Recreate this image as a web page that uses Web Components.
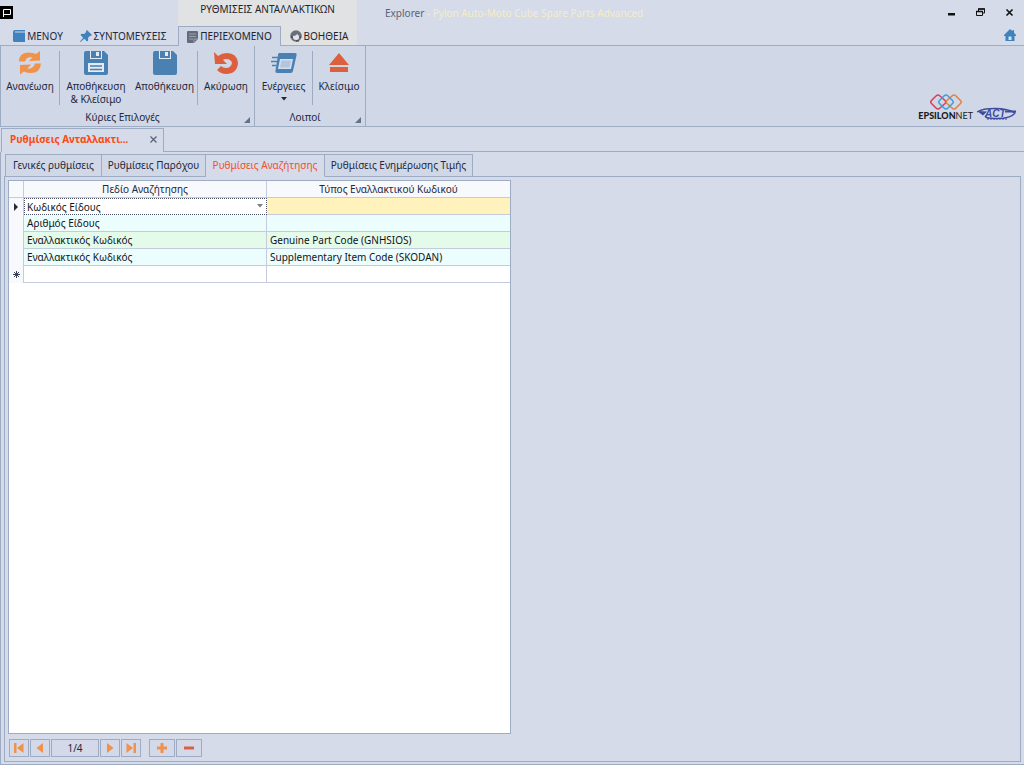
<!DOCTYPE html>
<html lang="el">
<head>
<meta charset="utf-8">
<title>Explorer - Pylon Auto-Moto Cube Spare Parts Advanced</title>
<style>
html,body{height:100%;margin:0}
body{
  --bg:#d5dbe9;--ribbon:#d0d7e7;--line:#9eacc3;--ink:#22283e;--orange:#f0924a;--red:#dd603e;--blue:#4a80b2;
  background:var(--bg);color:var(--ink);font:10px/13px "Noto Sans","Open Sans",sans-serif;overflow:hidden}
</style>
</head>
<body>
<pylon-window></pylon-window>
<script>
const define=(name,html,setup)=>{
  const t=document.createElement('template');
  t.innerHTML='<style>*{box-sizing:border-box}button,input,select{font:inherit;color:inherit;margin:0}</style>'+html;
  customElements.define(name,class extends HTMLElement{
    connectedCallback(){
      if(this.shadowRoot)return;
      this.attachShadow({mode:'open'}).append(t.content.cloneNode(true));
      if(setup)setup(this,this.shadowRoot);
    }
  });
};

const ICONS={
  app:['0 0 13 13','<path d="M0 0h13v13H0z" fill="#000"/><path d="M3.500 11V3.500h7v5h-7" fill="none" stroke="#fff"/>'],
  book:['0 0 12 12','<path d="M2 0h10v1.500H2V2.500h10V12H1.500Q0 12 0 10.500V2Q0 0 2 0z" fill="#3f82bd"/>'],
  pin:['0 0 12 12','<path d="M7 0l5 5-1 1-1-.3-2 2.300.2 2.500-1.200 1-2.700-2.700L.5 12 0 11.500l3.200-3.800L.5 5l1-1.200 2.500.2L6.300 2 6 1z" fill="#3f82bd"/>'],
  note:['0 0 11 12','<path d="M1 0h9q1 0 1 1v7l-4 4H1q-1 0-1-1V1q0-1 1-1z" fill="#646b7a"/><path d="M2 3h7M2 5.500h7M2 8h4M7 12V8h4" stroke="#aab1bf" stroke-width=".8" fill="none"/>'],
  help:['0 0 12 12','<circle cx="6" cy="6" r="5.800" fill="#69707c"/><path d="M2.800 6q3 .3 4.400-2 .7 1.700 2.200 2 0 4-3.300 4T2.800 6z" fill="#e1e3e7"/><path d="M1 7h2M9 7h2M6 11h3" stroke="#2f3541"/>'],
  home:['0 0 12 12','<path d="M6 0l2.500 2.200V1H10v2.700L12 6v1h-1.500v5H1.500V7H0V6z" fill="#3f82bd"/><path d="M4.500 7.500h3V11h-3z" fill="#d5e3f2"/>'],
  min:['0 0 9 9','<path d="M1 5h7v2.500H1z" fill="#111"/>'],
  restore:['0 0 9 9','<path d="M2.500 3V1h6v4h-2M.5 3.500h6v4h-6z" fill="none" stroke="#111"/><path d="M2 1h7M0 3.500h7" stroke="#111" stroke-width="1.500"/>'],
  close:['0 0 9 9','<path d="M1.500 1.500l6 6m0-6l-6 6" stroke="#111" stroke-width="1.600"/>'],
  thin:['0 0 9 9','<path d="M1.500 1.500l6 6m0-6l-6 6" stroke="#59647a" stroke-width="1.300"/>'],
  refresh:['0 0 24 24','<path d="M1 10.500Q1 2 10 1.500q5 0 8 1.500l4-3v9.500l-11 .5 3.500-3.500Q8.500 5 7 10.500zM23 12.500q-1 9.500-10 9.500-4 0-7-1.500L2 23.500V14l11-.5-3.500 4q5.500 1 7.500-5z" fill="#f0924a"/>'],
  saveclose:['0 0 24 24','<path d="M2 0h4v8h12V0h2l4 4v18q0 2-2 2H2q-2 0-2-2V2Q0 0 2 0z" fill="#4a80b2"/><path d="M7 0h10v7H7z" fill="#4a80b2"/><path d="M6 0h1v7h10V0h1v8H6zM12 1h3v4h-3zM4 12h16v9H4z" fill="#e3ebf5"/><path d="M6 15h12M6 18.500h12" stroke="#4a80b2" stroke-width="1.500"/>'],
  save:['0 0 24 24','<path d="M2 0h4v8h12V0h2l4 4v18q0 2-2 2H2q-2 0-2-2V2Q0 0 2 0z" fill="#4a80b2"/><path d="M7 0h10v7H7z" fill="#4a80b2"/><path d="M6 0h1v7h10V0h1v8H6zM12 1h3v4h-3z" fill="#e3ebf5"/>'],
  undo:['0 0 24 24','<path d="M0 1l4 4Q8 2 13 2q10 0 11 10-1 11-12 11-5 0-9-4l4-4q2 2 5 2 5 0 6-5-1-4-6-4-2 0-3 1l4 4H1z" fill="#dd603e"/>'],
  actions:['0 0 26 22','<path d="M8 1h16q2 0 1.600 2L22 19q-.4 2-2.400 2H6q-2 0-1.600-2L7 3q.2-2 1-2z" fill="#4a80b2"/><path d="M9 7h13l-2 10H7z" fill="#d3deed"/><path d="M10.500 8.500h9.500l-1.500 7H9z" fill="#4a80b2" opacity=".25"/><path d="M1 5.500h6M0 9.500h6M1 13.500h4" stroke="#4a80b2" stroke-width="1.600"/>'],
  eject:['0 0 20 20','<path d="M10 0l10 12H0zM1 14h18v5H1z" fill="#dd603e"/>'],
  down:['0 0 6 4','<path d="M0 0h6L3 3.500z" fill="#22283e"/>'],
  corner:['0 0 6 6','<path d="M6 0v6H0z" fill="#667088"/>'],
  first:['0 0 10 10','<path d="M0 0h2.500v10H0zM9.500 0v10L3 5z" fill="#f0924a"/>'],
  prev:['0 0 10 10','<path d="M8 0v10L1.500 5z" fill="#f0924a"/>'],
  next:['0 0 10 10','<path d="M2 0v10l6.500-5z" fill="#f0924a"/>'],
  last:['0 0 10 10','<path d="M7.500 0H10v10H7.500zM.5 0v10L7 5z" fill="#f0924a"/>'],
  plus:['0 0 10 10','<path d="M3.500 0h3v3.500H10v3H6.500V10h-3V6.500H0v-3h3.500z" fill="#f0924a"/>'],
  minus:['0 0 10 10','<path d="M0 3.500h10v3H0z" fill="#dd603e"/>'],
  current:['0 0 4 8','<path d="M0 0l4 4-4 4z" fill="#22283e"/>'],
  newrow:['0 0 7 7','<path d="M3.500 0v7M0 3.500h7M1 1l5 5m0-5L1 6" stroke="#3a4258" stroke-width="1"/>'],
  epsilon:['0 0 32 16','<g fill="none" stroke-width="1.500"><path d="M6 2Q8 0 10 2L15 6.500q1.500 1.500 0 3L10 14q-2 2-4 0L1.500 9.500q-1.500-1.500 0-3z" stroke="#dc3c55"/><path d="M22 2q2-2 4 0l4.500 4.500q1.500 1.500 0 3L26 14q-2 2-4 0l-5-4.500q-1.500-1.500 0-3z" stroke="#e5813d"/><path d="M14 2q2-2 4 0l4.500 4.500q1.500 1.500 0 3L18 14q-2 2-4 0L9.500 9.500q-1.500-1.500 0-3z" stroke="#3f9fd0"/></g>']
};
customElements.define('pylon-icon',class extends HTMLElement{
  connectedCallback(){
    if(this.shadowRoot)return;
    const [box,body]=ICONS[this.getAttribute('name')],[,,w,h]=box.split(' ');
    this.attachShadow({mode:'open'}).innerHTML='<style>:host{display:block;flex:none}svg{display:block}</style><svg aria-hidden="true" width="'+w+'" height="'+h+'" viewBox="'+box+'">'+body+'</svg>';
  }
});

define('ribbon-tab',`<style>
:host{display:block}
button{display:flex;align-items:center;gap:2px;height:19px;width:100%;padding:0;border:1px solid transparent;border-bottom:0;background:none;justify-content:center;white-space:nowrap}
:host([active]) button{background:var(--ribbon);border-color:var(--line);height:20px}
</style><button type="button"><slot name="icon"></slot><slot></slot></button>`);

define('ribbon-button',`<style>
:host{display:block;flex:none}
:host([divider]){border-right:1px solid var(--line)}
button{display:flex;flex-direction:column;align-items:center;width:100%;height:54px;padding:0;border:0;background:none;line-height:13px;text-align:center;white-space:nowrap}
.i{height:24px;display:flex;align-items:center;margin-bottom:5px}
.t{display:flex;flex-direction:column;align-items:center}
::slotted(pylon-icon[slot=more]){margin-top:4px}
</style><button type="button"><span class="i"><slot name="icon"></slot></span><span class="t"><slot></slot></span><slot name="more"></slot></button>`);

define('ribbon-group',`<style>
:host{display:flex;flex-direction:column;border-right:1px solid var(--line)}
.b{display:flex;align-items:start;height:63px;padding-top:5px}
.f{display:flex;align-items:center;height:17px;padding-right:4px}
.f span{flex:1;text-align:center}
.f pylon-icon{padding-top:4px}
</style><div class="b"><slot></slot></div><div class="f"><span><slot name="title"></slot></span><pylon-icon name="corner"></pylon-icon></div>`);

define('title-bar',`<style>
:host{display:grid;grid-template-columns:178px 179px minmax(0,1fr) auto;flex:none;height:46px;border-bottom:1px solid var(--line)}
.l,.c{display:flex;flex-direction:column;justify-content:space-between}
.l>pylon-icon{padding-top:6px}
.row{display:flex;align-items:end}
.l .row{padding-left:8px}
.c{background:#e1e2e4;color:#22242c}
.c .h{text-align:center;padding-top:3px}
.c .row{margin-bottom:-1px;align-items:start}
.t{padding:7px 0 0 28px;color:#5b6376;white-space:nowrap}
.t b{font-weight:400;color:#f3eec4}
.w{display:flex;flex-direction:column;align-items:end;justify-content:space-between;padding:8px 8px 4px 0}
.w div{display:flex;gap:20px;padding-right:2px}
.w button{border:0;background:none;padding:0;display:block}
.m{width:60px}.s{width:110px}.p{width:103px}.v{width:76px}
</style>
<div class="l"><pylon-icon name="app"></pylon-icon><div class="row"><ribbon-tab class="m"><pylon-icon slot="icon" name="book"></pylon-icon>ΜΕΝΟΥ</ribbon-tab><ribbon-tab class="s"><pylon-icon slot="icon" name="pin"></pylon-icon>ΣΥΝΤΟΜΕΥΣΕΙΣ</ribbon-tab></div></div>
<div class="c"><div class="h">ΡΥΘΜΙΣΕΙΣ ΑΝΤΑΛΛΑΚΤΙΚΩΝ</div><div class="row"><ribbon-tab class="p" active><pylon-icon slot="icon" name="note"></pylon-icon>ΠΕΡΙΕΧΟΜΕΝΟ</ribbon-tab><ribbon-tab class="v"><pylon-icon slot="icon" name="help"></pylon-icon>ΒΟΗΘΕΙΑ</ribbon-tab></div></div>
<div class="t">Explorer <b>- Pylon Auto-Moto Cube Spare Parts Advanced</b></div>
<div class="w"><div><button aria-label="Minimize"><pylon-icon name="min"></pylon-icon></button><button aria-label="Restore"><pylon-icon name="restore"></pylon-icon></button><button aria-label="Close"><pylon-icon name="close"></pylon-icon></button></div><button aria-label="Home"><pylon-icon name="home"></pylon-icon></button></div>`);

define('act-logo',`<style>:host{display:block}svg{display:block}</style>
<svg width="40" height="14" viewBox="0 0 40 14" role="img" aria-label="ACT"><path d="M0 5Q5 1.500 18 1.500t20 4.500q-4 5.500-18 5.500T9 8.500" fill="none" stroke="#3d4ba0" stroke-width="1.300"/><path d="M0 4l10 .5-4 4z" fill="#3d4ba0"/><text x="8" y="10" font-family="Liberation Sans" font-size="10" font-weight="700" font-style="italic" fill="#3d4ba0">ACT</text><path d="M28 3.500h11v2H28z" fill="#3d4ba0"/><path d="M10 12h20" stroke="#3d4ba0" stroke-dasharray="2 1"/></svg>`);

define('ribbon-bar',`<style>
:host{display:flex;flex:none;height:81px;background:var(--ribbon);border-bottom:1px solid var(--line);border-left:1px solid var(--line)}
.sp{flex:1}
.logos{display:flex;align-items:end;gap:4px;padding:0 7px 5px 0}
.e{display:flex;flex-direction:column;align-items:center;font:9px/10px Lato,sans-serif;color:#191b22}
.e pylon-icon{margin-bottom:1px}
.logos b{font-weight:900}
.x1{width:59px}.x2{width:72px}.x3{width:66px}.x4{width:56px}.x5{width:58px}.x6{width:52px}
</style>
<ribbon-group><ribbon-button class="x1" divider><pylon-icon slot="icon" name="refresh"></pylon-icon>Ανανέωση</ribbon-button><ribbon-button class="x2"><pylon-icon slot="icon" name="saveclose"></pylon-icon><span>Αποθήκευση</span><span>&amp; Κλείσιμο</span></ribbon-button><ribbon-button class="x3" divider><pylon-icon slot="icon" name="save"></pylon-icon>Αποθήκευση</ribbon-button><ribbon-button class="x4"><pylon-icon slot="icon" name="undo"></pylon-icon>Ακύρωση</ribbon-button><span slot="title">Κύριες Επιλογές</span></ribbon-group>
<ribbon-group><ribbon-button class="x5" divider><pylon-icon slot="icon" name="actions"></pylon-icon>Ενέργειες<pylon-icon slot="more" name="down"></pylon-icon></ribbon-button><ribbon-button class="x6"><pylon-icon slot="icon" name="eject"></pylon-icon>Κλείσιμο</ribbon-button><span slot="title">Λοιποί</span></ribbon-group>
<div class="sp"></div>
<div class="logos"><div class="e"><pylon-icon name="epsilon"></pylon-icon><span><b>EPSILON</b>NET</span></div><act-logo></act-logo></div>`);

define('document-tabs',`<style>
:host{display:flex;flex:none;height:25px;padding:1px 0 0 1px}
.t{display:flex;align-items:center;justify-content:space-between;width:163px;padding:0 5px 2px 8px;border:1px solid var(--line);border-bottom:0;color:#fa4a12;font-weight:700}
.r{flex:1;border-bottom:1px solid var(--line)}
button{border:0;background:none;padding:0}
</style><div class="t"><span><slot></slot></span><button aria-label="Κλείσιμο καρτέλας"><pylon-icon name="thin"></pylon-icon></button></div><div class="r"></div>`);

define('page-tab',`<style>
:host{display:block;flex:none}
button{display:block;width:100%;height:23px;padding:0;background:var(--ribbon);border:1px solid var(--line);border-left:0;white-space:nowrap}
:host(:first-child) button{border-left:1px solid var(--line)}
:host([active]) button{background:var(--bg);border-bottom-color:var(--bg);color:#f2502a}
</style><button type="button"><slot></slot></button>`);

define('search-grid',`<style>
:host{display:block;background:#fff;border:1px solid var(--line);color:#11131c}
table{border-collapse:separate;border-spacing:0;width:100%;table-layout:fixed}
td,th{height:17px;padding:0 3px;line-height:14px;border-right:1px solid #c3cbdd;border-bottom:1px solid #c3cbdd;text-align:left;white-space:nowrap;font-weight:400}
tr>:last-child{border-right:0}
thead th{height:17px;background:#f7f9fd;text-align:center;color:var(--ink)}
tbody th{background:#f7f9fd;padding:0;border-bottom:0}
tbody th pylon-icon{display:flex;justify-content:center}
.h{width:15px}.a{width:243px}
.c td{background:#ebfdfd}.g td{background:#e5fbea}
.cur td{background:#fff2bd}
.cur td.ed{padding:0;background:#fff;border:1px dotted #4d5368}
label{display:flex;align-items:center;position:relative}
select{appearance:none;width:100%;height:15px;padding:0 2px;border:0;background:none;outline:0}
label pylon-icon{position:absolute;right:3px;top:5px;opacity:.6}
</style>
<table><colgroup><col class="h"><col class="a"><col></colgroup>
<thead><tr><th></th><th>Πεδίο Αναζήτησης</th><th>Τύπος Εναλλακτικού Κωδικού</th></tr></thead>
<tbody>
<tr class="cur"><th><pylon-icon name="current"></pylon-icon></th><td class="ed"><label><select aria-label="Πεδίο Αναζήτησης"><option>Κωδικός Είδους</option><option>Αριθμός Είδους</option><option>Εναλλακτικός Κωδικός</option></select><pylon-icon name="down"></pylon-icon></label></td><td></td></tr>
<tr class="c"><th></th><td>Αριθμός Είδους</td><td></td></tr>
<tr class="g"><th></th><td>Εναλλακτικός Κωδικός</td><td>Genuine Part Code (GNHSIOS)</td></tr>
<tr class="c"><th></th><td>Εναλλακτικός Κωδικός</td><td>Supplementary Item Code (SKODAN)</td></tr>
<tr><th><pylon-icon name="newrow"></pylon-icon></th><td></td><td></td></tr>
</tbody></table>`);

define('record-navigator',`<style>
:host{display:flex;gap:1px;padding:5px 0 0 1px}
button,output{display:flex;align-items:center;justify-content:center;width:20px;height:18px;padding:0;border:1px solid var(--line);background:#d3d9e8}
output{width:48px}.w{width:26px}.gap{margin-left:7px}
</style><button aria-label="Πρώτη"><pylon-icon name="first"></pylon-icon></button><button aria-label="Προηγούμενη"><pylon-icon name="prev"></pylon-icon></button><output>1/4</output><button aria-label="Επόμενη"><pylon-icon name="next"></pylon-icon></button><button aria-label="Τελευταία"><pylon-icon name="last"></pylon-icon></button><button class="w gap" aria-label="Προσθήκη"><pylon-icon name="plus"></pylon-icon></button><button class="w" aria-label="Διαγραφή"><pylon-icon name="minus"></pylon-icon></button>`);

define('pylon-window',`<style>
:host{display:flex;flex-direction:column;height:100vh}
main{flex:1;display:flex;flex-direction:column;min-height:0;padding:2px 0 0 3px;border-left:1px solid var(--line);border-bottom:1px solid var(--line)}
nav{display:flex;height:23px;margin-bottom:-1px;padding-left:1px;position:relative;z-index:1}
.panel{flex:1;display:flex;flex-direction:column;min-height:0;margin:0 3px 2px 0;padding:3px;border:1px solid var(--line)}
.area{flex:1;display:grid;grid-template-columns:minmax(0,503px) 1fr;min-height:0}
record-navigator{height:24px}
.a{width:97px}.b{width:104px}.c{width:119px}.d{width:148px}
</style>
<title-bar></title-bar><ribbon-bar></ribbon-bar><document-tabs>Ρυθμίσεις Ανταλλακτι...</document-tabs>
<main><nav><page-tab class="a">Γενικές ρυθμίσεις</page-tab><page-tab class="b">Ρυθμίσεις Παρόχου</page-tab><page-tab class="c" active>Ρυθμίσεις Αναζήτησης</page-tab><page-tab class="d">Ρυθμίσεις Ενημέρωσης Τιμής</page-tab></nav>
<div class="panel"><div class="area"><search-grid></search-grid></div><record-navigator></record-navigator></div></main>`);
</script>
</body>
</html>
